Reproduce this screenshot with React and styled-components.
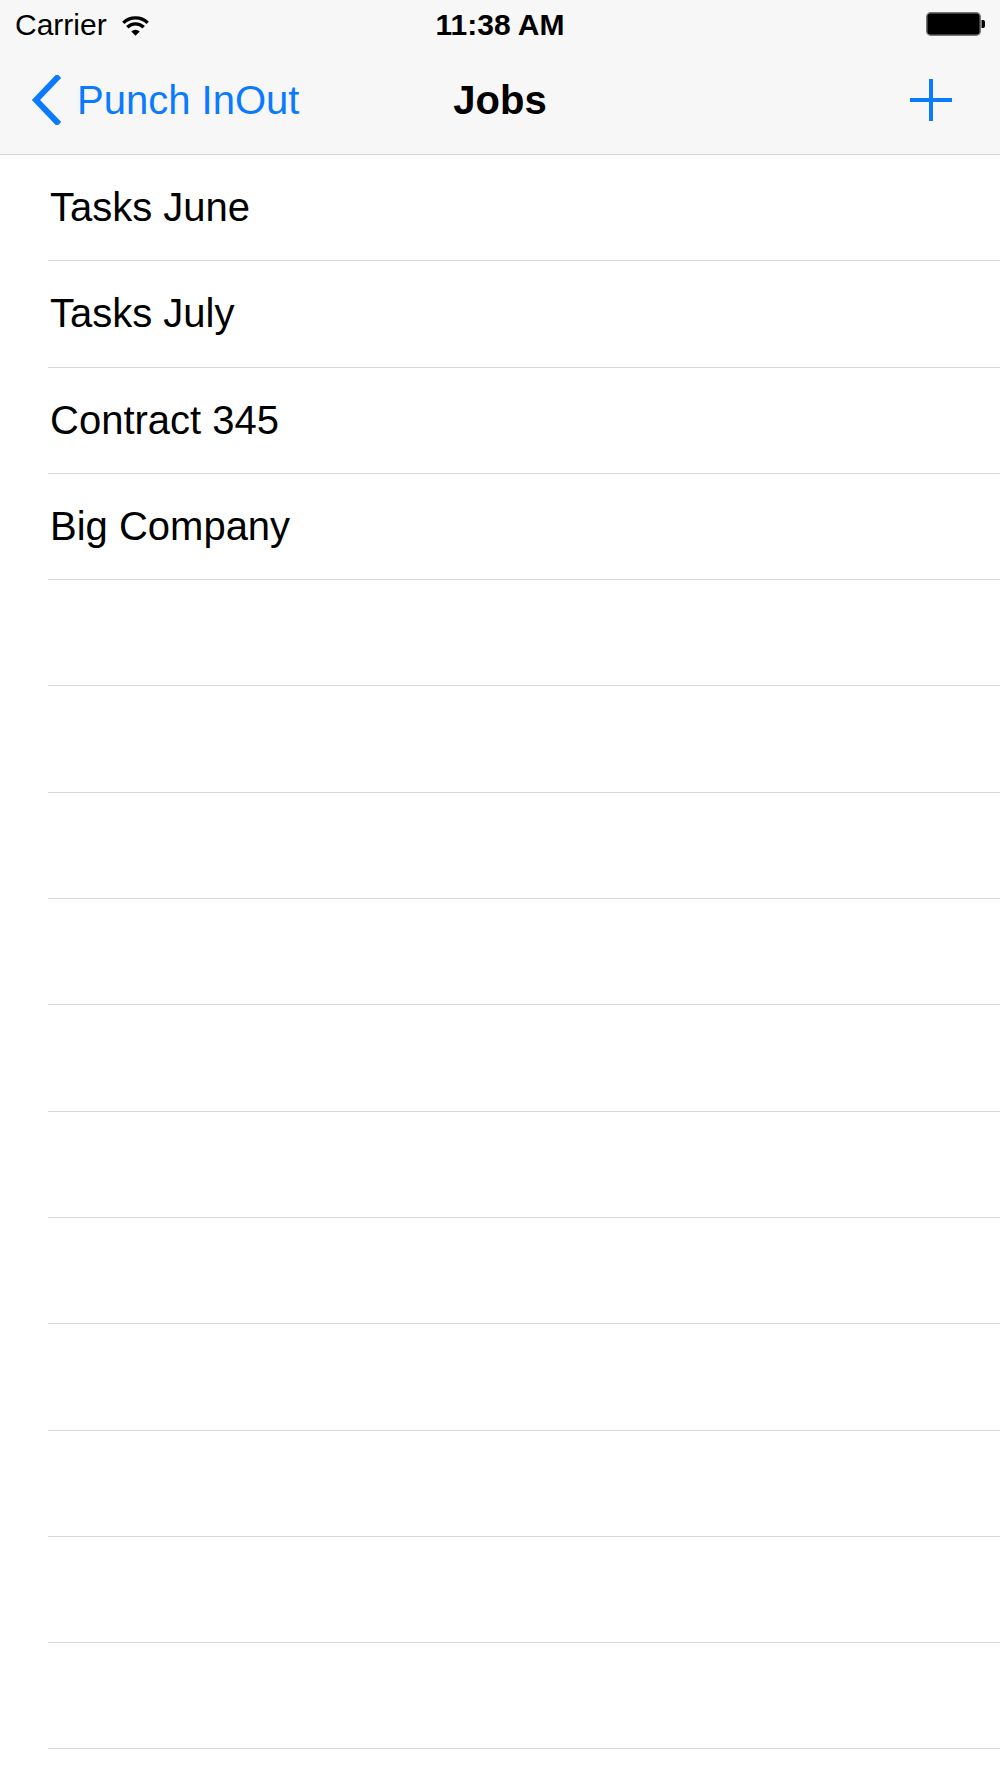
import React from "react";
import styled, { createGlobalStyle } from "styled-components";

const Global = createGlobalStyle`
  html, body { margin: 0; padding: 0; background: #fff; }
  body { overflow: hidden; font-family: "Liberation Sans", Arial, sans-serif; }
`;

const Screen = styled.div`
  width: 1000px;
  height: 1778px;
  overflow: hidden;
  background: #fff;
  display: flex;
  flex-direction: column;
`;

const Header = styled.header`
  flex-shrink: 0;
  background: #f7f7f7;
  border-bottom: 1.5px solid #d6d6d8;
  height: 155px;
  box-sizing: border-box;
  display: flex;
  flex-direction: column;
`;

const StatusBar = styled.div`
  height: 48px;
  display: grid;
  grid-template-columns: 1fr auto 1fr;
  align-items: center;
  padding: 0 14px;
  font-size: 30px;
  color: #000;
`;

const StatusLeft = styled.div`
  display: flex;
  align-items: center;
  gap: 15px;
  padding-top: 2px;
  padding-left: 1px;
`;

const Time = styled.div`
  font-weight: 700;
  padding-top: 2px;
`;

const StatusRight = styled.div`
  display: flex;
  justify-content: flex-end;
  align-items: center;
`;

const NavBar = styled.nav`
  flex: 1;
  display: grid;
  grid-template-columns: 1fr auto 1fr;
  align-items: center;
  padding: 0 30px 2px 30px;
`;

const BackButton = styled.button`
  all: unset;
  display: flex;
  align-items: center;
  gap: 16px;
  color: #0a7aff;
  font-size: 40px;
  cursor: pointer;
`;

const Title = styled.h1`
  margin: 0;
  font-size: 40px;
  font-weight: 700;
  color: #000;
`;

const AddButton = styled.button`
  all: unset;
  justify-self: end;
  margin-right: 18px;
  display: flex;
  cursor: pointer;
`;

const List = styled.ul`
  flex-shrink: 0;
  list-style: none;
  margin: 0;
  padding: 0;
`;

const Row = styled.li`
  height: 106.3px;
  box-sizing: border-box;
  margin-left: 48px;
  border-bottom: 1.3px solid #d9d9dc;
  display: flex;
  align-items: center;
  padding-left: 2px;
  font-size: 40px;
  color: #000;
`;

const Wifi = () => (
  <svg width="27" height="21" viewBox="0 0 27 21">
    <path d="M13.5 20.8 L9.26 16.56 A6 6 0 0 1 17.74 16.56 Z" fill="#000" />
    <path d="M5.3 12.3 A11.6 11.6 0 0 1 21.7 12.3" stroke="#000" strokeWidth="3.4" fill="none" />
    <path d="M1.3 7.9 A17.4 17.4 0 0 1 25.7 7.9" stroke="#000" strokeWidth="3.4" fill="none" />
  </svg>
);

const Battery = () => (
  <svg width="60" height="24" viewBox="0 0 60 24">
    <rect x="0.75" y="0.75" width="53.5" height="22.5" rx="4" fill="#000" stroke="#777" strokeWidth="1.5" />
    <path d="M55.5 8 h1.5 a2 2 0 0 1 2 2 v4 a2 2 0 0 1 -2 2 h-1.5 z" fill="#000" />
  </svg>
);

const Chevron = () => (
  <svg width="31" height="50" viewBox="0 0 31 50">
    <path d="M27 3 L6 25 L27 47" stroke="#0a7aff" strokeWidth="6" fill="none" strokeLinecap="square" />
  </svg>
);

const Plus = () => (
  <svg width="42" height="42" viewBox="0 0 42 42">
    <path d="M21 0 V42 M0 21 H42" stroke="#0a7aff" strokeWidth="4" />
  </svg>
);

const jobs = ["Tasks June", "Tasks July", "Contract 345", "Big Company"];
const rows = [...jobs, ...Array(12).fill("")];

export default function App() {
  return (
    <>
      <Global />
      <Screen>
        <Header>
          <StatusBar>
            <StatusLeft>
              <span>Carrier</span>
              <Wifi />
            </StatusLeft>
            <Time>11:38 AM</Time>
            <StatusRight>
              <Battery />
            </StatusRight>
          </StatusBar>
          <NavBar>
            <BackButton>
              <Chevron />
              <span>Punch InOut</span>
            </BackButton>
            <Title>Jobs</Title>
            <AddButton aria-label="Add">
              <Plus />
            </AddButton>
          </NavBar>
        </Header>
        <List>
          {rows.map((r, i) => (
            <Row key={i}>{r}</Row>
          ))}
        </List>
      </Screen>
    </>
  );
}
